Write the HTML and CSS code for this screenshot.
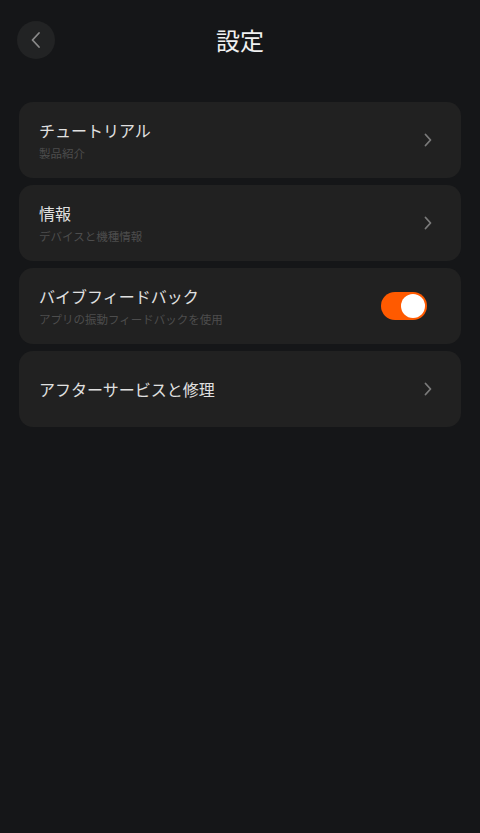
FILE: index.html
```html
<!DOCTYPE html>
<html lang="ja">
<head>
<meta charset="utf-8">
<title>設定</title>
<link rel="stylesheet" href="styles.css">
</head>
<body>
<div class="page">
  <header class="header">
    <button class="back" aria-label="戻る">
      <svg width="14" height="20" viewBox="0 0 14 20"><path d="M10 3 L3.5 10 L10 17" fill="none" stroke="#8a8a8a" stroke-width="1.8" stroke-linecap="round" stroke-linejoin="round"/></svg>
    </button>
    <h1 class="title">設定</h1>
  </header>
  <main class="list">
    <div class="card">
      <div class="text">
        <div class="label">チュートリアル</div>
        <div class="sub">製品紹介</div>
      </div>
      <svg class="chev" width="10" height="16" viewBox="0 0 10 16"><path d="M2.5 2.5 L7.5 8 L2.5 13.5" fill="none" stroke="#7a7a7a" stroke-width="1.8" stroke-linecap="round" stroke-linejoin="round"/></svg>
    </div>
    <div class="card">
      <div class="text">
        <div class="label">情報</div>
        <div class="sub">デバイスと機種情報</div>
      </div>
      <svg class="chev" width="10" height="16" viewBox="0 0 10 16"><path d="M2.5 2.5 L7.5 8 L2.5 13.5" fill="none" stroke="#7a7a7a" stroke-width="1.8" stroke-linecap="round" stroke-linejoin="round"/></svg>
    </div>
    <div class="card">
      <div class="text">
        <div class="label">バイブフィードバック</div>
        <div class="sub">アプリの振動フィードバックを使用</div>
      </div>
      <div class="toggle"><div class="knob"></div></div>
    </div>
    <div class="card">
      <div class="text">
        <div class="label">アフターサービスと修理</div>
      </div>
      <svg class="chev" width="10" height="16" viewBox="0 0 10 16"><path d="M2.5 2.5 L7.5 8 L2.5 13.5" fill="none" stroke="#7a7a7a" stroke-width="1.8" stroke-linecap="round" stroke-linejoin="round"/></svg>
    </div>
  </main>
</div>
</body>
</html>
```
FILE: styles.css
```css
html, body {
  margin: 0;
  padding: 0;
  background: #151618;
  font-family: "Noto Sans CJK JP", "Noto Sans", sans-serif;
  color: #e8e8e8;
}
.page {
  width: 480px;
  min-height: 833px;
}
.header {
  height: 80px;
  display: flex;
  align-items: center;
  justify-content: center;
  position: relative;
}
.back {
  position: absolute;
  left: 17px;
  top: 21px;
  width: 38px;
  height: 38px;
  border-radius: 50%;
  background: #222324;
  border: none;
  padding: 0;
  display: flex;
  align-items: center;
  justify-content: center;
}
.title {
  margin: 0;
  font-size: 24px;
  font-weight: 400;
  color: #f0f0f0;
  line-height: 1;
}
.list {
  margin-top: 22px;
  padding: 0 19px;
  display: flex;
  flex-direction: column;
  gap: 7px;
}
.card {
  height: 76px;
  background: #212121;
  border-radius: 14px;
  display: flex;
  align-items: center;
  padding: 0 28px 0 20px;
}
.text {
  flex: 1;
  display: flex;
  flex-direction: column;
  gap: 4px;
}
.label {
  font-size: 16px;
  line-height: 22px;
  color: #e0e0e0;
}
.sub {
  font-size: 11.5px;
  line-height: 16px;
  color: #4d4d4d;
}
.chev {
  display: block;
}
.toggle {
  width: 46px;
  height: 28px;
  border-radius: 14px;
  background: #ff5a00;
  margin-right: 6px;
  display: flex;
  align-items: center;
  justify-content: flex-end;
  padding: 0 2px;
  box-sizing: border-box;
}
.knob {
  width: 24px;
  height: 24px;
  border-radius: 50%;
  background: #ffffff;
}
```
